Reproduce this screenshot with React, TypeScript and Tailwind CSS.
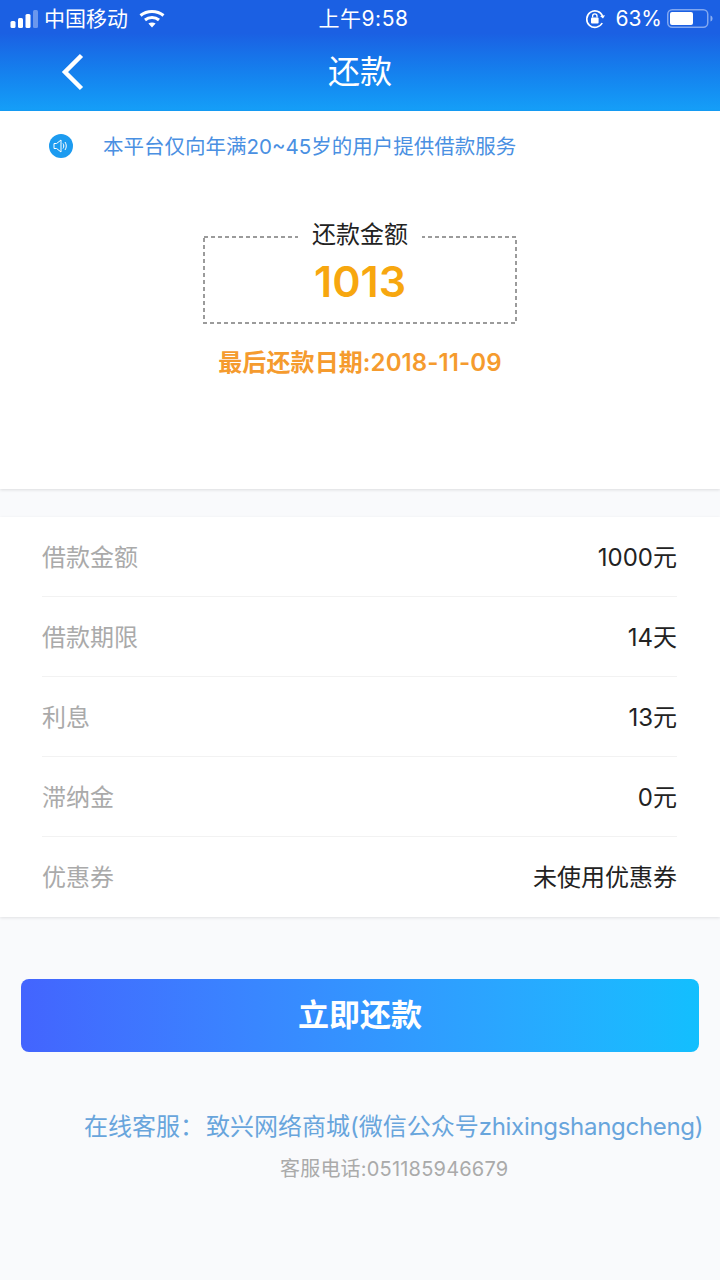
const FONT = "font-['Inter','Noto_Sans_CJK_SC',sans-serif]";

const rows: [string, string][] = [
  ["借款金额", "1000元"],
  ["借款期限", "14天"],
  ["利息", "13元"],
  ["滞纳金", "0元"],
  ["优惠券", "未使用优惠券"],
];

function Signal() {
  return (
    <svg width="28" height="18" viewBox="0 0 28 18" className="ml-[10px]">
      <rect x="0.5" y="11" width="5" height="7" rx="1.5" fill="#fff" />
      <rect x="8" y="8" width="5" height="10" rx="1.5" fill="#fff" />
      <rect x="15.5" y="4" width="5" height="14" rx="1.5" fill="#fff" />
      <rect x="23" y="0" width="5" height="18" rx="1.5" fill="#fff" fillOpacity="0.35" />
    </svg>
  );
}

function Wifi() {
  return (
    <svg width="26" height="19" viewBox="0 0 26 19" fill="none" stroke="#fff" strokeWidth="3">
      <path d="M1.5 6.5C8 1 18 1 24.5 6.5" />
      <path d="M6 11C10 7.7 16 7.7 20 11" />
      <path d="M13 18.5L9.4 14.6C11.4 13 14.6 13 16.6 14.6Z" fill="#fff" stroke="none" />
    </svg>
  );
}

function RotationLock() {
  return (
    <svg width="20" height="20" viewBox="0 0 20 20" fill="none">
      <path d="M17.6 7.2A8.2 8.2 0 1 0 17.2 14" stroke="#fff" strokeWidth="1.6" />
      <path d="M15 7l3 2.6L20 6.2z" fill="#fff" />
      <rect x="6" y="8.5" width="7.6" height="6" rx="1" fill="#fff" />
      <path d="M7.6 8.5V7a2.2 2.2 0 0 1 4.4 0v1.5" stroke="#fff" strokeWidth="1.3" />
    </svg>
  );
}

function Battery() {
  return (
    <svg width="46" height="20" viewBox="0 0 46 20" fill="none">
      <rect x="0.75" y="0.75" width="40" height="17.5" rx="4.5" stroke="#fff" strokeOpacity="0.45" strokeWidth="1.5" />
      <rect x="3" y="3" width="23" height="13" rx="2" fill="#fff" />
      <path d="M43.5 6.5c1.4.4 2 1.5 2 3s-.6 2.6-2 3z" fill="#fff" fillOpacity="0.5" />
    </svg>
  );
}

function Speaker() {
  return (
    <span className="flex h-6 w-6 shrink-0 items-center justify-center rounded-full bg-[#1c9bf0]">
      <svg width="20" height="20" viewBox="0 0 20 20" fill="none" stroke="#fff" strokeWidth="1">
        <path d="M3 7.5h2.6L10 4v12l-4.4-3.5H3z" strokeLinejoin="round" />
        <path d="M12 7.5c1 1.5 1 3.5 0 5" />
        <path d="M14 6c1.7 2.4 1.7 5.6 0 8" />
      </svg>
    </span>
  );
}

export default function App() {
  return (
    <div className={`${FONT} flex min-h-[1280px] w-[720px] flex-col bg-[#f9fafc]`}>
      <header className="h-[111px] bg-gradient-to-b from-[#1b60e3] from-30% to-[#159ff8] text-white">
        <div className="relative flex h-[37px] items-center text-[21px] leading-none">
          <Signal />
          <span className="ml-[6px]">中国移动</span>
          <span className="ml-[11px]"><Wifi /></span>
          <span className="absolute left-0 right-0 pl-[7px] text-center tracking-[0.5px]">上午9:58</span>
          <span className="ml-auto flex items-center">
            <RotationLock />
            <span className="ml-[10px] mr-[5px]">63%</span>
            <span className="mr-[7px]"><Battery /></span>
          </span>
        </div>
        <div className="relative flex h-[70px] items-center justify-center">
          <svg width="26" height="38" viewBox="0 0 26 38" fill="none" stroke="#fff" strokeWidth="4.5" className="absolute left-[60px] top-[16px]">
            <path d="M21.5 2.5L5 19l16.5 16.5" />
          </svg>
          <span className="text-[32px] leading-none">还款</span>
        </div>
      </header>

      <section className="flex h-[378px] flex-col items-center bg-white shadow-[0_1px_3px_rgba(0,0,0,0.12)]">
        <div className="flex h-[70px] w-full items-center pl-[49px]">
          <Speaker />
          <span className="ml-[30px] pt-[2px] text-[20.5px] leading-none text-[#4a90e2]">本平台仅向年满20~45岁的用户提供借款服务</span>
        </div>
        <div className="relative mt-[55px] flex h-[88px] w-[314px] flex-col items-center">
          <svg width="314" height="88" viewBox="0 0 314 88" fill="none" className="absolute inset-0">
            <rect x="1" y="1" width="312" height="86" stroke="#9b9b9b" strokeWidth="2" strokeDasharray="4 3" />
          </svg>
          <span className="relative mt-[-17px] bg-white px-[14px] text-[24px] leading-[32px] text-[#222]">还款金额</span>
          <span className="relative mt-[2px] text-[43px] font-semibold leading-[56px] text-[#f7a70f]">1013</span>
        </div>
        <div className="mt-[23px] text-[24px] font-semibold leading-[32px] tracking-[0.1px] text-[#f59b2e]">最后还款日期:2018-11-09</div>
      </section>

      <section className="mt-[28px] bg-white pl-[42px] pr-[43px] shadow-[0_1px_3px_rgba(0,0,0,0.1)]">
        {rows.map(([k, v], i) => (
          <div key={k} className={`flex h-[80px] items-center justify-between pt-[2px] text-[24px] leading-none ${i < rows.length - 1 ? "border-b border-[#f2f2f2]" : ""}`}>
            <span className="text-[#aaaaaa]">{k}</span>
            <span className="text-[#222]">{v}</span>
          </div>
        ))}
      </section>

      <button className="mx-[21px] mt-[62px] h-[73px] rounded-lg bg-gradient-to-r from-[#4364fe] to-[#12bffe] text-[31px] font-bold text-white">
        立即还款
      </button>

      <div className="mt-[59px] whitespace-nowrap pl-[84px] text-[24px] leading-[32px] text-[#68a5dc]">
        在线客服：<span className="ml-[2px]">致兴网络商城(微信公众号</span><span className="tracking-[-0.3px]">zhixingshangcheng)</span>
      </div>
      <div className="mt-[13px] pl-[280px] text-[20px] leading-[26px] tracking-[0.2px] text-[#aaaaaa]">客服电话:051185946679</div>
    </div>
  );
}
